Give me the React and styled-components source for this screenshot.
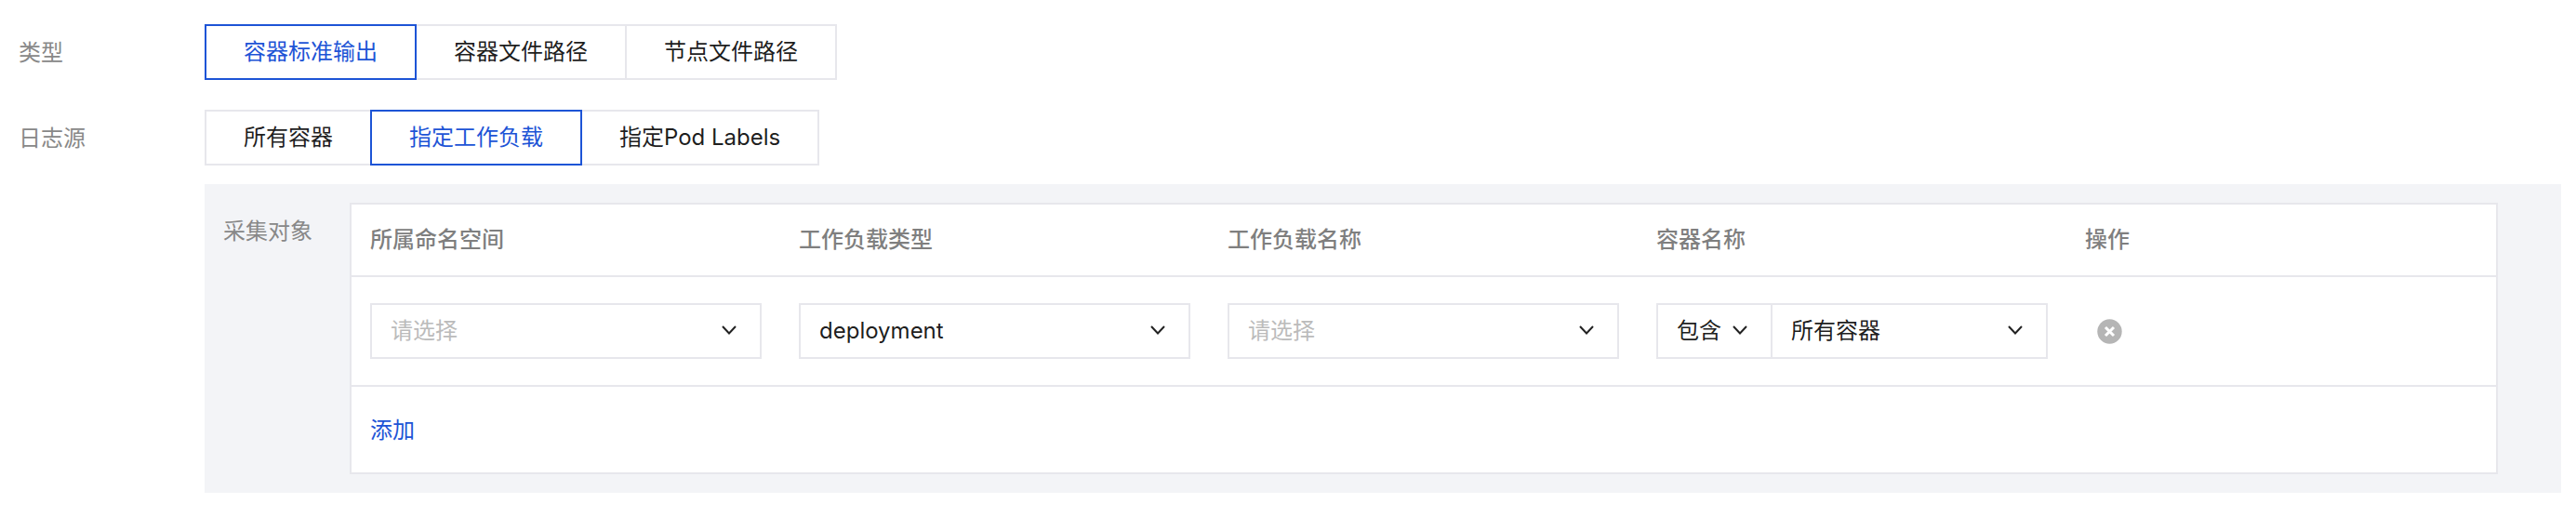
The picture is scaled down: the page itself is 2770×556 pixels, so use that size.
import React from 'react';
import styled, { createGlobalStyle } from 'styled-components';

const Global = createGlobalStyle`
  html, body { margin: 0; padding: 0; background: #fff; }
  body { font-family: Inter, "Noto Sans CJK SC", sans-serif; font-size: 24px; line-height: 32px; color: rgba(0,0,0,.9); }
`;
const BLUE = '#1d54d6';
const LINE = '#e7e7ec';

const Page = styled.div`
  box-sizing: border-box;
  width: 2770px;
  height: 556px;
  padding: 26px 16px 0 20px;
`;
const FormRow = styled.div`
  display: grid;
  grid-template-columns: 200px max-content;
  align-items: center;
  margin-bottom: 32px;
`;
const Label = styled.div`
  color: #888;
  padding-top: 2px;
`;
const Segments = styled.div`
  display: flex;
  height: 60px;
`;
const Segment = styled.div`
  box-sizing: border-box;
  height: 60px;
  padding: 0 40px;
  margin-left: -2px;
  &:first-child { margin-left: 0; }
  display: flex;
  align-items: center;
  white-space: nowrap;
  background: #fff;
  position: relative;
  z-index: ${p => (p.$active ? 1 : 0)};
  border: 2px solid ${p => (p.$active ? BLUE : LINE)};
  color: ${p => (p.$active ? BLUE : 'rgba(0,0,0,.9)')};
`;
const Panel = styled.div`
  box-sizing: border-box;
  margin: -12px 0 0 200px;
  height: 332px;
  background: #f3f4f7;
  padding: 20px 68px 20px 20px;
  display: flex;
`;
const PanelLabel = styled.div`
  width: 136px;
  flex: none;
  color: #888;
  padding-top: 15px;
`;
const Table = styled.div`
  flex: 1;
  box-sizing: border-box;
  border: 2px solid ${LINE};
  background: #fff;
  display: flex;
  flex-direction: column;
`;
const Cols = styled.div`
  box-sizing: border-box;
  display: grid;
  grid-template-columns: repeat(4, 461px) 1fr;
  padding-left: 20px;
  align-items: center;
  border-bottom: 2px solid ${LINE};
`;
const HeadRow = styled(Cols)`
  height: 78px;
`;
const BodyRow = styled(Cols)`
  height: 118px;
`;
const HeadCell = styled.div`
  color: #7f7f7f;
  font-weight: 500;
`;
const Select = styled.div`
  box-sizing: border-box;
  width: 421px;
  height: 60px;
  border: 2px solid ${LINE};
  display: flex;
  align-items: center;
  justify-content: space-between;
  padding: 0 24px 0 20px;
  color: ${p => (p.$placeholder ? '#bbb' : 'rgba(0,0,0,.9)')};
`;
const Group = styled.div`
  box-sizing: border-box;
  width: 421px;
  height: 60px;
  border: 2px solid ${LINE};
  display: flex;
`;
const GroupPart = styled.div`
  box-sizing: border-box;
  display: flex;
  align-items: center;
  justify-content: space-between;
  flex: ${p => (p.$grow ? 1 : 'none')};
  width: ${p => (p.$grow ? 'auto' : '123px')};
  padding: 0 24px 0 20px;
  border-right: ${p => (p.$grow ? '0' : `2px solid ${LINE}`)};
`;
const Footer = styled.div`
  flex: 1;
  padding: 2px 0 0 20px;
  display: flex;
  align-items: center;
`;
const AddLink = styled.a`
  color: ${BLUE};
`;
const Remove = styled.svg`
  display: block;
  width: 27px;
  height: 27px;
  margin-left: 13px;
`;
const Chevron = styled.svg`
  flex: none;
  display: block;
  width: 18px;
  height: 12px;
  margin-top: -2px;
`;

const Arrow = () => (
  <Chevron viewBox="0 0 18 12" fill="none" stroke="#222" strokeWidth="2">
    <path d="M2 2 L9 9.5 L16 2" />
  </Chevron>
);

const SegmentRow = ({ label, items, active }) => (
  <FormRow>
    <Label>{label}</Label>
    <Segments>
      {items.map((t, i) => (
        <Segment key={t} $active={i === active}>{t}</Segment>
      ))}
    </Segments>
  </FormRow>
);

export default function App() {
  return (
    <Page>
      <Global />
      <SegmentRow label="类型" items={['容器标准输出', '容器文件路径', '节点文件路径']} active={0} />
      <SegmentRow label="日志源" items={['所有容器', '指定工作负载', '指定Pod Labels']} active={1} />
      <Panel>
        <PanelLabel>采集对象</PanelLabel>
        <Table>
          <HeadRow>
            <HeadCell>所属命名空间</HeadCell>
            <HeadCell>工作负载类型</HeadCell>
            <HeadCell>工作负载名称</HeadCell>
            <HeadCell>容器名称</HeadCell>
            <HeadCell>操作</HeadCell>
          </HeadRow>
          <BodyRow>
            <Select $placeholder>请选择<Arrow /></Select>
            <Select>deployment<Arrow /></Select>
            <Select $placeholder>请选择<Arrow /></Select>
            <Group>
              <GroupPart>包含<Arrow /></GroupPart>
              <GroupPart $grow>所有容器<Arrow /></GroupPart>
            </Group>
            <Remove viewBox="0 0 27 27">
              <circle cx="13.5" cy="13.5" r="13.2" fill="#b5b5b5" />
              <path d="M9 9 L18 18 M18 9 L9 18" stroke="#fff" strokeWidth="3" />
            </Remove>
          </BodyRow>
          <Footer><AddLink>添加</AddLink></Footer>
        </Table>
      </Panel>
    </Page>
  );
}
